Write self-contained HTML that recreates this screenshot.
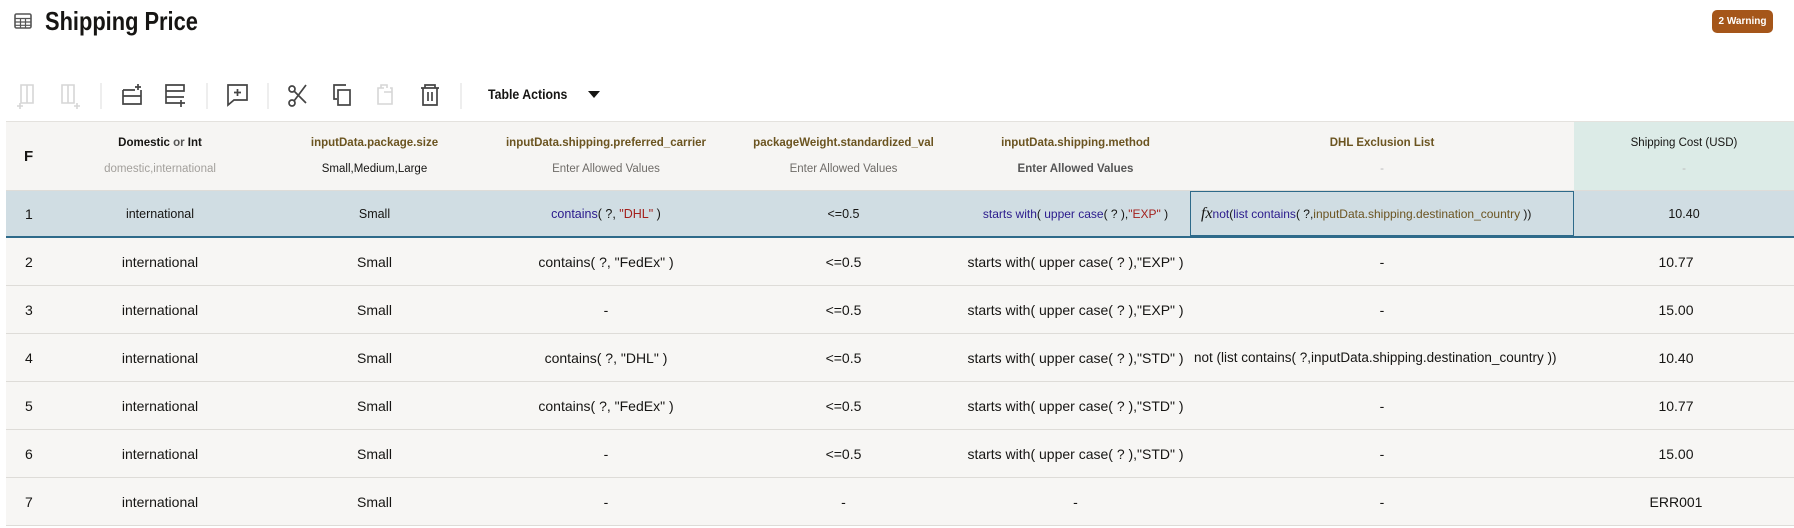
<!DOCTYPE html>
<html><head><meta charset="utf-8">
<style>
*{margin:0;padding:0;box-sizing:border-box}
body{width:1794px;height:528px;overflow:hidden;background:#fff;font-family:"Liberation Sans",sans-serif;color:#161513;position:relative}
.abs{position:absolute}
.title{left:45px;top:6px;font-size:26px;font-weight:bold;transform:scaleX(0.84);transform-origin:left center;white-space:nowrap}
.badge{left:1712px;top:10px;width:61px;height:23px;background:#a5561a;color:#fff;border-radius:5px;font-size:10px;font-weight:bold;text-align:center;line-height:23px}
.ta{left:488px;top:86px;font-size:14px;font-weight:bold;transform:scaleX(0.88);transform-origin:left}
.row{position:absolute;left:6px;width:1788px;border-bottom:1px solid #dedcd8}
.c{position:absolute;top:0;height:100%;display:flex;align-items:center;justify-content:center;text-align:center;white-space:nowrap}
.hd .c{flex-direction:column}
.h1{font-size:11.5px;font-weight:bold;color:#6b5420;margin-bottom:14px}
.h2{font-size:11.5px;color:#6f6c68}
.r{font-size:14px}
.kw{color:#2a1a8c}.st{color:#a3201d}.id{color:#6b5420}
</style></head><body>
<svg class="abs" style="left:14px;top:13px" width="18" height="16" viewBox="0 0 18 16"><rect x="1" y="1" width="16" height="14" rx="1.5" fill="none" stroke="#555" stroke-width="1.6"/><path d="M1 5.5h16M1 9h16M1 12.3h16M6.5 5.5v9.5M11.5 5.5v9.5" stroke="#555" stroke-width="1.2"/></svg>
<div class="abs title">Shipping Price</div>
<div class="abs badge">2 Warning</div>

<svg class="abs" style="left:0;top:80px" width="470" height="32" viewBox="0 0 470 32">
<g fill="none" stroke="#d6d6d6" stroke-width="1.6">
<path d="M21 5h12v18H21z M27 5v18"/><path d="M17 26h6M20 23v6"/>
<path d="M62 5h12v18H62z M68 5v18"/><path d="M74 26h6M77 23v6"/>
<path d="M384 8h-6v16h14V8h-2M381 8V5h6v3M384 12h8v12"/>
</g>
<g fill="none" stroke="#444" stroke-width="1.7">
<path d="M123 10v14h18V10M123 16h18M123 10h12"/><path d="M138 4v6M135 7h6"/>
<path d="M166 5h18v6h-18zM166 11v12h12M166 17h18"/><path d="M181 20v7M178 23h7"/>
<path d="M228 5h19v15h-13l-6 5z"/><path d="M237.5 9v7M234 12.5h7"/>
<circle cx="292" cy="9" r="3"/><circle cx="292" cy="23" r="3"/><path d="M294 11l12 12M294 21l12-16"/>
<path d="M334 9v-4h12M334 5v14h3"/><rect x="338" y="10" width="12" height="15"/>
<path d="M421 8h18M425 8V5h10v3M423 8v17h14V8M428 12v9M432 12v9"/>
</g>
<path d="M101 3v26M207 3v26M268 3v26M461 3v26" stroke="#ddd"/>
</svg>
<div class="abs ta">Table Actions</div>
<svg class="abs" style="left:588px;top:91px" width="12" height="8"><path d="M0 0h12L6 7z" fill="#161513"/></svg>

<div class="row hd" style="top:121px;height:70px;background:#f6f5f3;border-top:1px solid #e4e2de">
<div class="c" style="left:0;width:51px;align-items:flex-start;padding-left:18px;font-size:15px;font-weight:bold">F</div>
<div class="c" style="left:51px;width:206px"><div class="h1" style="color:#161513">Domestic <span style="color:#555">or</span> Int</div><div class="h2" style="color:#a3a09c">domestic,international</div></div>
<div class="c" style="left:257px;width:223px"><div class="h1">inputData.package.size</div><div class="h2" style="color:#161513">Small,Medium,Large</div></div>
<div class="c" style="left:480px;width:240px"><div class="h1">inputData.shipping.preferred_carrier</div><div class="h2">Enter Allowed Values</div></div>
<div class="c" style="left:720px;width:235px"><div class="h1">packageWeight.standardized_val</div><div class="h2">Enter Allowed Values</div></div>
<div class="c" style="left:955px;width:229px"><div class="h1">inputData.shipping.method</div><div class="h2" style="font-weight:bold;color:#555">Enter Allowed Values</div></div>
<div class="c" style="left:1184px;width:384px"><div class="h1">DHL Exclusion List</div><div class="h2" style="color:#bbb">-</div></div>
<div class="c" style="left:1568px;width:220px;background:#dcebe7"><div class="h1" style="color:#161513;font-weight:normal">Shipping Cost (USD)</div><div class="h2" style="color:#bbb">-</div></div>
</div>

<div class="row" style="top:191px;height:47px;background:#d0dde3;border-bottom:2px solid #2e6a8a">
<div class="c r" style="left:0;width:51px;justify-content:flex-start;padding-left:19px">1</div>
<div class="c" style="left:51px;width:206px;font-size:12.5px">international</div>
<div class="c" style="left:257px;width:223px;font-size:12.5px">Small</div>
<div class="c" style="left:480px;width:240px;font-size:12.5px"><span><span class="kw">contains</span>( ?, <span class="st">"DHL"</span> )</span></div>
<div class="c" style="left:720px;width:235px;font-size:12.5px">&lt;=0.5</div>
<div class="c" style="left:955px;width:229px;font-size:12px"><span><span class="kw">starts with</span>( <span class="kw">upper case</span>( ? ),<span class="st">"EXP"</span> )</span></div>
<div class="c" style="left:1184px;width:384px;font-size:12px;justify-content:flex-start;padding-left:10px;border:1px solid #2e6a8a;background:#d0dde3"><span><i style="font-family:'Liberation Serif',serif;font-size:16px">fx</i><span class="kw">not</span>(<span class="kw">list contains</span>( ?,<span class="id">inputData.shipping.destination_country</span> ))</span></div>
<div class="c" style="left:1568px;width:220px;font-size:12.5px;background:#d0dde3">10.40</div>
</div>

<div class="row" style="top:238px;height:48px;background:#f7f6f4">
<div class="c r" style="left:0;width:51px;justify-content:flex-start;padding-left:19px">2</div>
<div class="c r" style="left:51px;width:206px">international</div><div class="c r" style="left:257px;width:223px">Small</div>
<div class="c r" style="left:480px;width:240px">contains( ?, "FedEx" )</div><div class="c r" style="left:720px;width:235px">&lt;=0.5</div>
<div class="c r" style="left:955px;width:229px">starts with( upper case( ? ),"EXP" )</div><div class="c r" style="left:1184px;width:384px">-</div>
<div class="c r" style="left:1568px;width:204px">10.77</div></div>

<div class="row" style="top:286px;height:48px;background:#f7f6f4">
<div class="c r" style="left:0;width:51px;justify-content:flex-start;padding-left:19px">3</div>
<div class="c r" style="left:51px;width:206px">international</div><div class="c r" style="left:257px;width:223px">Small</div>
<div class="c r" style="left:480px;width:240px">-</div><div class="c r" style="left:720px;width:235px">&lt;=0.5</div>
<div class="c r" style="left:955px;width:229px">starts with( upper case( ? ),"EXP" )</div><div class="c r" style="left:1184px;width:384px">-</div>
<div class="c r" style="left:1568px;width:204px">15.00</div></div>

<div class="row" style="top:334px;height:48px;background:#f7f6f4">
<div class="c r" style="left:0;width:51px;justify-content:flex-start;padding-left:19px">4</div>
<div class="c r" style="left:51px;width:206px">international</div><div class="c r" style="left:257px;width:223px">Small</div>
<div class="c r" style="left:480px;width:240px">contains( ?, "DHL" )</div><div class="c r" style="left:720px;width:235px">&lt;=0.5</div>
<div class="c r" style="left:955px;width:229px">starts with( upper case( ? ),"STD" )</div><div class="c r" style="left:1184px;width:384px;justify-content:flex-start;padding-left:4px;font-size:13.5px">not (list contains( ?,inputData.shipping.destination_country ))</div>
<div class="c r" style="left:1568px;width:204px">10.40</div></div>

<div class="row" style="top:382px;height:48px;background:#f7f6f4">
<div class="c r" style="left:0;width:51px;justify-content:flex-start;padding-left:19px">5</div>
<div class="c r" style="left:51px;width:206px">international</div><div class="c r" style="left:257px;width:223px">Small</div>
<div class="c r" style="left:480px;width:240px">contains( ?, "FedEx" )</div><div class="c r" style="left:720px;width:235px">&lt;=0.5</div>
<div class="c r" style="left:955px;width:229px">starts with( upper case( ? ),"STD" )</div><div class="c r" style="left:1184px;width:384px">-</div>
<div class="c r" style="left:1568px;width:204px">10.77</div></div>

<div class="row" style="top:430px;height:48px;background:#f7f6f4">
<div class="c r" style="left:0;width:51px;justify-content:flex-start;padding-left:19px">6</div>
<div class="c r" style="left:51px;width:206px">international</div><div class="c r" style="left:257px;width:223px">Small</div>
<div class="c r" style="left:480px;width:240px">-</div><div class="c r" style="left:720px;width:235px">&lt;=0.5</div>
<div class="c r" style="left:955px;width:229px">starts with( upper case( ? ),"STD" )</div><div class="c r" style="left:1184px;width:384px">-</div>
<div class="c r" style="left:1568px;width:204px">15.00</div></div>

<div class="row" style="top:478px;height:48px;background:#f7f6f4">
<div class="c r" style="left:0;width:51px;justify-content:flex-start;padding-left:19px">7</div>
<div class="c r" style="left:51px;width:206px">international</div><div class="c r" style="left:257px;width:223px">Small</div>
<div class="c r" style="left:480px;width:240px">-</div><div class="c r" style="left:720px;width:235px">-</div>
<div class="c r" style="left:955px;width:229px">-</div><div class="c r" style="left:1184px;width:384px">-</div>
<div class="c r" style="left:1568px;width:204px">ERR001</div></div>
</body></html>
